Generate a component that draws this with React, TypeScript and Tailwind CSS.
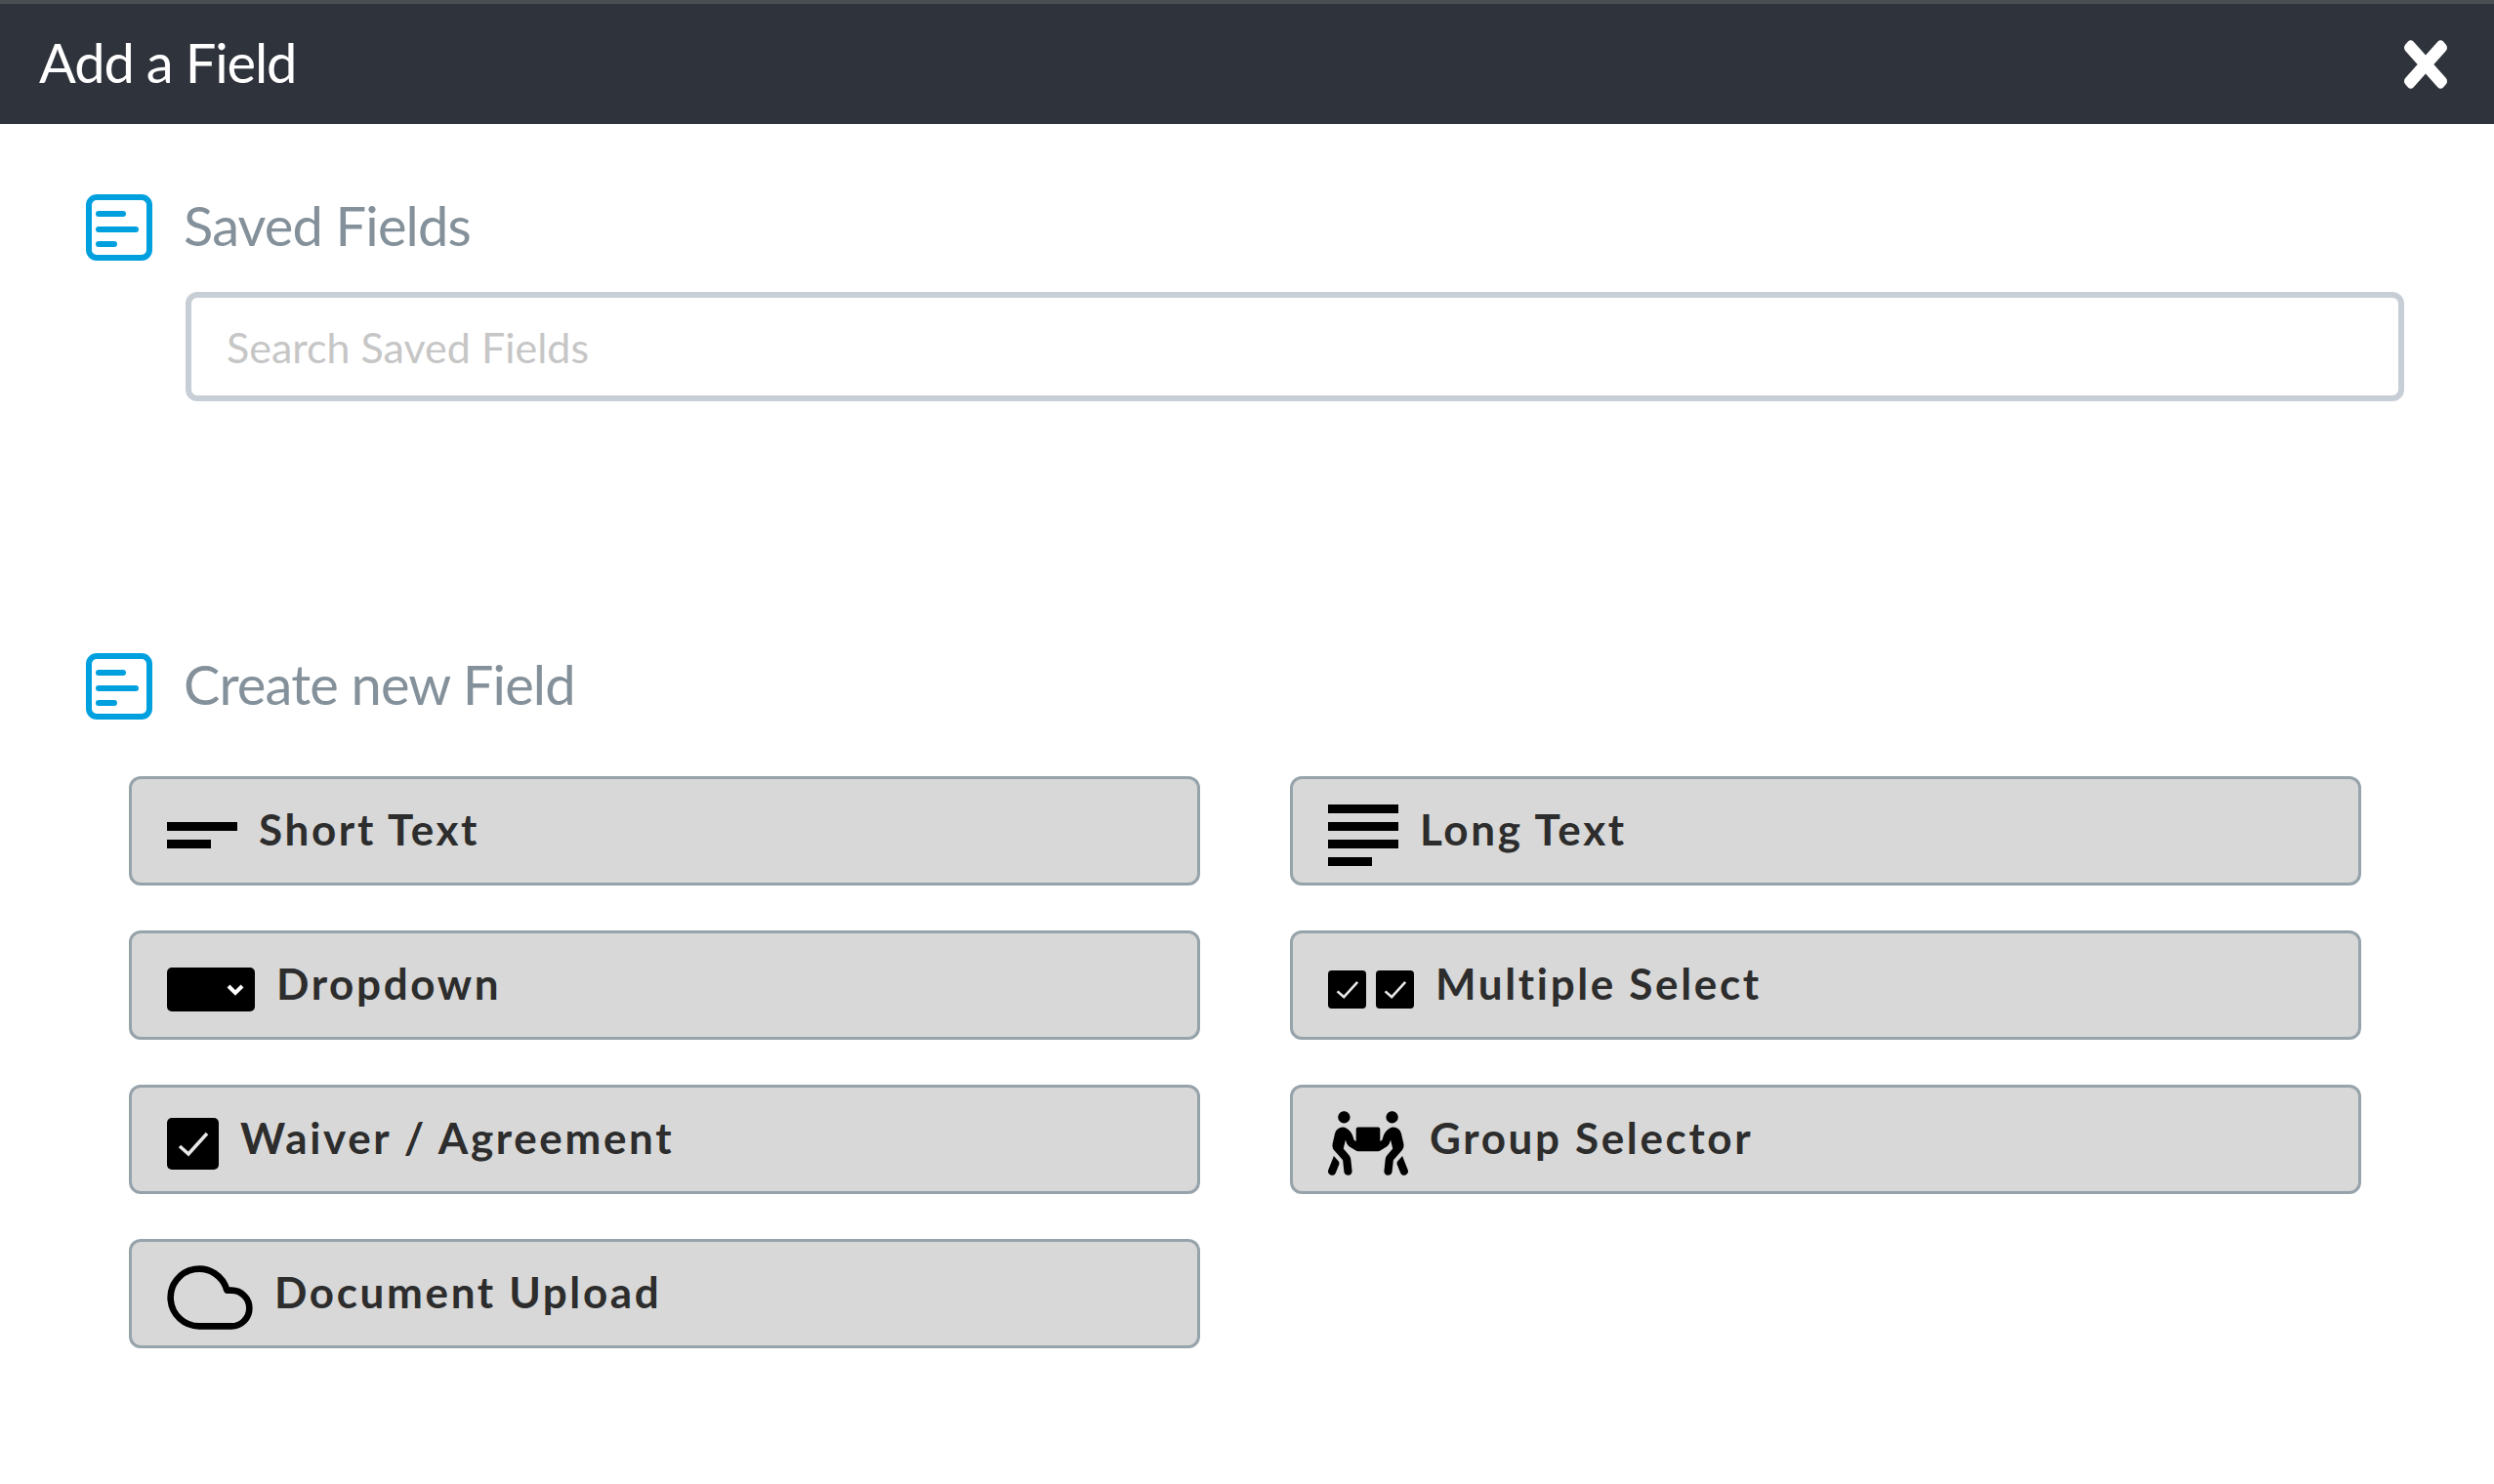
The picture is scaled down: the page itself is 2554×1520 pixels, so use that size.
import { ReactNode } from 'react';
import { FaPeopleCarry, FaTimes } from 'react-icons/fa';
import { FiCloud } from 'react-icons/fi';

function DocIcon() {
  return (
    <svg width={68} height={68} viewBox="0 0 68 68" className="shrink-0" fill="none" stroke="#00a0df" strokeLinecap="round">
      <rect x={3} y={3} width={62} height={62} rx={8} strokeWidth={6} />
      <path d="M13 20H38M13 36H51M13 51H29" strokeWidth={6} />
    </svg>
  );
}

function CheckBox({ size }: { size: number }) {
  return (
    <svg width={size} height={size} viewBox="0 0 53 53">
      <rect width={53} height={53} rx={5} />
      <path d="M13 29L22 37L41 16" fill="none" stroke="#e8e8e8" strokeWidth={3.5} />
    </svg>
  );
}

function SectionTitle({ children }: { children: ReactNode }) {
  return (
    <div className="flex items-center gap-8">
      <DocIcon />
      <h2 className="-mt-1 text-[56px] leading-none tracking-[-0.015em] text-[#84919a]">{children}</h2>
    </div>
  );
}

function FieldButton({ icon, label }: { icon: ReactNode; label: string }) {
  return (
    <button className="flex h-28 items-center gap-5.5 rounded-xl border-3 border-[#97a3ab] bg-[#d8d8d8] pl-9 text-[44px] font-bold tracking-[0.06em] text-[#2d2d2d]">
      <span className="mt-2 flex shrink-0 items-center">{icon}</span>
      <span className="mb-1">{label}</span>
    </button>
  );
}

function Bars({ rows }: { rows: number[] }) {
  return (
    <div className="flex w-18 flex-col gap-[9px]">
      {rows.map((w, i) => (
        <div key={i} className="h-[9px] bg-black" style={{ width: w }} />
      ))}
    </div>
  );
}

// laid out row by row, left column then right column
const fields = [
  { label: 'Short Text', icon: <Bars rows={[72, 45]} /> },
  { label: 'Long Text', icon: <Bars rows={[72, 72, 72, 45]} /> },
  {
    label: 'Dropdown',
    icon: (
      <svg width={90} height={45} viewBox="0 0 90 45">
        <rect width={90} height={45} rx={5} />
        <path d="M63 19L70 26L77 19" fill="none" stroke="#fff" strokeWidth={4} />
      </svg>
    ),
  },
  {
    label: 'Multiple Select',
    icon: (
      <div className="flex gap-2.5">
        <CheckBox size={39} />
        <CheckBox size={39} />
      </div>
    ),
  },
  { label: 'Waiver / Agreement', icon: <CheckBox size={53} /> },
  { label: 'Group Selector', icon: <FaPeopleCarry size={82} color="#000" /> },
  { label: 'Document Upload', icon: <FiCloud size={88} strokeWidth={1.8} color="#000" /> },
];

export default function App() {
  return (
    <div className="min-h-screen bg-white font-['Lato',sans-serif]">
      <header className="flex h-[127px] items-center justify-between border-t-4 border-[#4a4d52] bg-[#2f333b] pr-12 pl-10">
        <h1 className="-mt-1 text-[56px] tracking-[-0.02em] text-white">Add a Field</h1>
        <FaTimes preserveAspectRatio="none" className="h-18 w-11 text-white" />
      </header>

      <main className="pt-18">
        <section className="flex flex-col pr-23 pl-22">
          <SectionTitle>Saved Fields</SectionTitle>
          <input
            placeholder="Search Saved Fields"
            className="mt-8 ml-[102px] h-28 rounded-xl border-6 border-[#c7ced5] px-9 text-[43px] placeholder:text-[#c6c6c6]"
          />
        </section>

        <section className="mt-64.5 pl-22">
          <SectionTitle>Create new Field</SectionTitle>
        </section>

        <div className="mt-14.5 grid grid-cols-2 gap-x-23 gap-y-11.5 pr-34 pl-33">
          {fields.map((f) => (
            <FieldButton key={f.label} {...f} />
          ))}
        </div>
      </main>
    </div>
  );
}
